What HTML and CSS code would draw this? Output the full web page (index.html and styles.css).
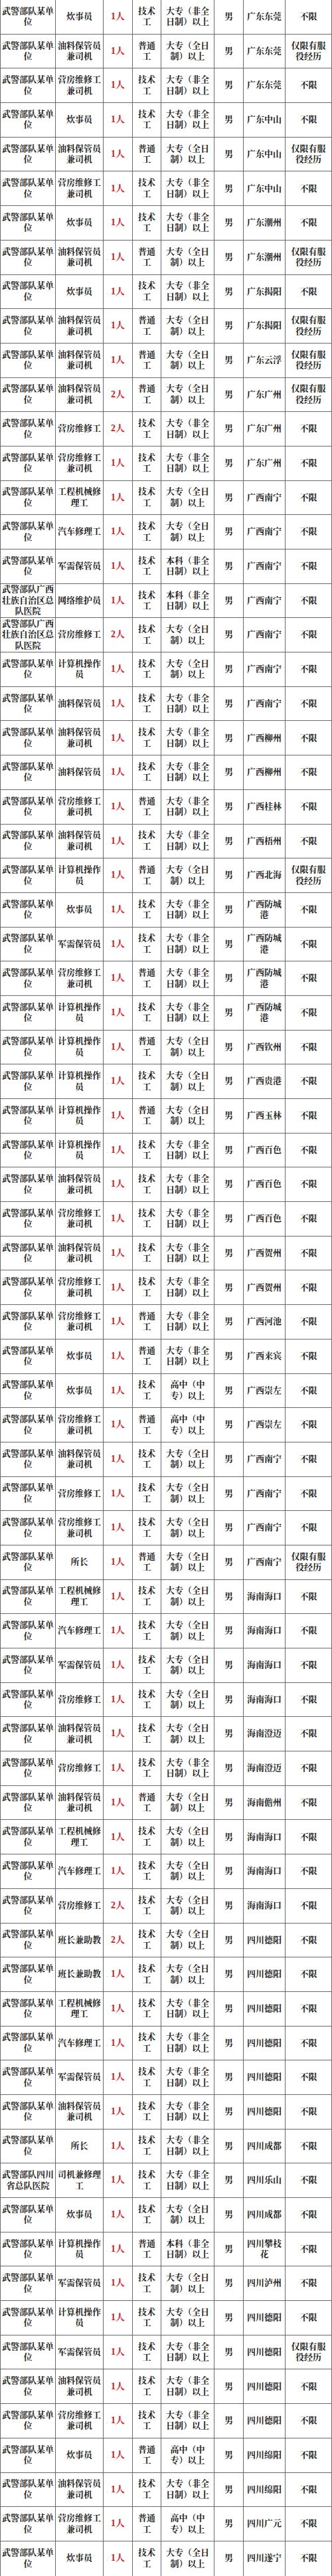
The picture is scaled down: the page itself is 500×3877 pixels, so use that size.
FILE: index.html
```html
<!DOCTYPE html>
<html lang="zh-CN">
<head>
<meta charset="utf-8">
<title>武警部队招聘岗位表</title>
<link rel="stylesheet" href="styles.css">
</head>
<body>
<table class="jobs">
<colgroup>
<col class="c-unit"><col class="c-post"><col class="c-num"><col class="c-type"><col class="c-edu"><col class="c-sex"><col class="c-place"><col class="c-req">
</colgroup>
<tbody>
<tr><td>武警部队某单位</td><td>炊事员</td><td class="num">1人</td><td>技术工</td><td>大专（非全日制）以上</td><td>男</td><td>广东东莞</td><td>不限</td></tr>
<tr><td>武警部队某单位</td><td>油料保管员兼司机</td><td class="num">1人</td><td>普通工</td><td>大专（全日制）以上</td><td>男</td><td>广东东莞</td><td>仅限有服役经历</td></tr>
<tr><td>武警部队某单位</td><td>营房维修工兼司机</td><td class="num">1人</td><td>技术工</td><td>大专（非全日制）以上</td><td>男</td><td>广东东莞</td><td>不限</td></tr>
<tr><td>武警部队某单位</td><td>炊事员</td><td class="num">1人</td><td>技术工</td><td>大专（非全日制）以上</td><td>男</td><td>广东中山</td><td>不限</td></tr>
<tr><td>武警部队某单位</td><td>油料保管员兼司机</td><td class="num">1人</td><td>普通工</td><td>大专（全日制）以上</td><td>男</td><td>广东中山</td><td>仅限有服役经历</td></tr>
<tr><td>武警部队某单位</td><td>营房维修工兼司机</td><td class="num">1人</td><td>技术工</td><td>大专（非全日制）以上</td><td>男</td><td>广东中山</td><td>不限</td></tr>
<tr><td>武警部队某单位</td><td>炊事员</td><td class="num">1人</td><td>技术工</td><td>大专（非全日制）以上</td><td>男</td><td>广东潮州</td><td>不限</td></tr>
<tr><td>武警部队某单位</td><td>油料保管员兼司机</td><td class="num">1人</td><td>普通工</td><td>大专（全日制）以上</td><td>男</td><td>广东潮州</td><td>仅限有服役经历</td></tr>
<tr><td>武警部队某单位</td><td>炊事员</td><td class="num">1人</td><td>技术工</td><td>大专（非全日制）以上</td><td>男</td><td>广东揭阳</td><td>不限</td></tr>
<tr><td>武警部队某单位</td><td>油料保管员兼司机</td><td class="num">1人</td><td>普通工</td><td>大专（全日制）以上</td><td>男</td><td>广东揭阳</td><td>仅限有服役经历</td></tr>
<tr><td>武警部队某单位</td><td>油料保管员兼司机</td><td class="num">1人</td><td>普通工</td><td>大专（全日制）以上</td><td>男</td><td>广东云浮</td><td>仅限有服役经历</td></tr>
<tr><td>武警部队某单位</td><td>油料保管员兼司机</td><td class="num">2人</td><td>普通工</td><td>大专（全日制）以上</td><td>男</td><td>广东广州</td><td>仅限有服役经历</td></tr>
<tr><td>武警部队某单位</td><td>营房维修工</td><td class="num">2人</td><td>技术工</td><td>大专（非全日制）以上</td><td>男</td><td>广东广州</td><td>不限</td></tr>
<tr><td>武警部队某单位</td><td>营房维修工兼司机</td><td class="num">1人</td><td>技术工</td><td>大专（非全日制）以上</td><td>男</td><td>广东广州</td><td>不限</td></tr>
<tr><td>武警部队某单位</td><td>工程机械修理工</td><td class="num">1人</td><td>技术工</td><td>大专（全日制）以上</td><td>男</td><td>广西南宁</td><td>不限</td></tr>
<tr><td>武警部队某单位</td><td>汽车修理工</td><td class="num">1人</td><td>技术工</td><td>大专（全日制）以上</td><td>男</td><td>广西南宁</td><td>不限</td></tr>
<tr><td>武警部队某单位</td><td>军需保管员</td><td class="num">1人</td><td>技术工</td><td>本科（非全日制）以上</td><td>男</td><td>广西南宁</td><td>不限</td></tr>
<tr><td>武警部队广西壮族自治区总队医院</td><td>网络维护员</td><td class="num">1人</td><td>技术工</td><td>本科（非全日制）以上</td><td>男</td><td>广西南宁</td><td>不限</td></tr>
<tr><td>武警部队广西壮族自治区总队医院</td><td>营房维修工</td><td class="num">2人</td><td>技术工</td><td>大专（全日制）以上</td><td>男</td><td>广西南宁</td><td>不限</td></tr>
<tr><td>武警部队某单位</td><td>计算机操作员</td><td class="num">1人</td><td>技术工</td><td>大专（全日制）以上</td><td>男</td><td>广西南宁</td><td>不限</td></tr>
<tr><td>武警部队某单位</td><td>油料保管员</td><td class="num">1人</td><td>技术工</td><td>大专（非全日制）以上</td><td>男</td><td>广西南宁</td><td>不限</td></tr>
<tr><td>武警部队某单位</td><td>油料保管员兼司机</td><td class="num">1人</td><td>技术工</td><td>大专（非全日制）以上</td><td>男</td><td>广西柳州</td><td>不限</td></tr>
<tr><td>武警部队某单位</td><td>油料保管员</td><td class="num">1人</td><td>技术工</td><td>大专（非全日制）以上</td><td>男</td><td>广西柳州</td><td>不限</td></tr>
<tr><td>武警部队某单位</td><td>营房维修工兼司机</td><td class="num">1人</td><td>普通工</td><td>大专（非全日制）以上</td><td>男</td><td>广西桂林</td><td>不限</td></tr>
<tr><td>武警部队某单位</td><td>油料保管员兼司机</td><td class="num">1人</td><td>技术工</td><td>大专（非全日制）以上</td><td>男</td><td>广西梧州</td><td>不限</td></tr>
<tr><td>武警部队某单位</td><td>计算机操作员</td><td class="num">1人</td><td>普通工</td><td>大专（全日制）以上</td><td>男</td><td>广西北海</td><td>仅限有服役经历</td></tr>
<tr><td>武警部队某单位</td><td>炊事员</td><td class="num">1人</td><td>技术工</td><td>大专（非全日制）以上</td><td>男</td><td>广西防城港</td><td>不限</td></tr>
<tr><td>武警部队某单位</td><td>军需保管员</td><td class="num">1人</td><td>技术工</td><td>大专（非全日制）以上</td><td>男</td><td>广西防城港</td><td>不限</td></tr>
<tr><td>武警部队某单位</td><td>营房维修工兼司机</td><td class="num">1人</td><td>普通工</td><td>大专（非全日制）以上</td><td>男</td><td>广西防城港</td><td>不限</td></tr>
<tr><td>武警部队某单位</td><td>计算机操作员</td><td class="num">1人</td><td>技术工</td><td>大专（非全日制）以上</td><td>男</td><td>广西防城港</td><td>不限</td></tr>
<tr><td>武警部队某单位</td><td>计算机操作员</td><td class="num">1人</td><td>普通工</td><td>大专（全日制）以上</td><td>男</td><td>广西钦州</td><td>不限</td></tr>
<tr><td>武警部队某单位</td><td>计算机操作员</td><td class="num">1人</td><td>技术工</td><td>大专（全日制）以上</td><td>男</td><td>广西贵港</td><td>不限</td></tr>
<tr><td>武警部队某单位</td><td>计算机操作员</td><td class="num">1人</td><td>普通工</td><td>大专（全日制）以上</td><td>男</td><td>广西玉林</td><td>不限</td></tr>
<tr><td>武警部队某单位</td><td>计算机操作员</td><td class="num">1人</td><td>技术工</td><td>大专（非全日制）以上</td><td>男</td><td>广西百色</td><td>不限</td></tr>
<tr><td>武警部队某单位</td><td>油料保管员兼司机</td><td class="num">1人</td><td>技术工</td><td>大专（非全日制）以上</td><td>男</td><td>广西百色</td><td>不限</td></tr>
<tr><td>武警部队某单位</td><td>营房维修工兼司机</td><td class="num">1人</td><td>技术工</td><td>大专（非全日制）以上</td><td>男</td><td>广西百色</td><td>不限</td></tr>
<tr><td>武警部队某单位</td><td>油料保管员兼司机</td><td class="num">1人</td><td>技术工</td><td>大专（非全日制）以上</td><td>男</td><td>广西贺州</td><td>不限</td></tr>
<tr><td>武警部队某单位</td><td>营房维修工兼司机</td><td class="num">1人</td><td>技术工</td><td>大专（非全日制）以上</td><td>男</td><td>广西贺州</td><td>不限</td></tr>
<tr><td>武警部队某单位</td><td>营房维修工兼司机</td><td class="num">1人</td><td>普通工</td><td>大专（非全日制）以上</td><td>男</td><td>广西河池</td><td>不限</td></tr>
<tr><td>武警部队某单位</td><td>炊事员</td><td class="num">1人</td><td>普通工</td><td>大专（非全日制）以上</td><td>男</td><td>广西来宾</td><td>不限</td></tr>
<tr><td>武警部队某单位</td><td>炊事员</td><td class="num">1人</td><td>技术工</td><td>高中（中专）以上</td><td>男</td><td>广西崇左</td><td>不限</td></tr>
<tr><td>武警部队某单位</td><td>营房维修工兼司机</td><td class="num">1人</td><td>普通工</td><td>高中（中专）以上</td><td>男</td><td>广西崇左</td><td>不限</td></tr>
<tr><td>武警部队某单位</td><td>油料保管员兼司机</td><td class="num">1人</td><td>技术工</td><td>大专（全日制）以上</td><td>男</td><td>广西南宁</td><td>不限</td></tr>
<tr><td>武警部队某单位</td><td>营房维修工</td><td class="num">1人</td><td>技术工</td><td>大专（全日制）以上</td><td>男</td><td>广西南宁</td><td>不限</td></tr>
<tr><td>武警部队某单位</td><td>营房维修工兼司机</td><td class="num">1人</td><td>技术工</td><td>大专（全日制）以上</td><td>男</td><td>广西南宁</td><td>不限</td></tr>
<tr><td>武警部队某单位</td><td>所长</td><td class="num">1人</td><td>普通工</td><td>大专（全日制）以上</td><td>男</td><td>广西南宁</td><td>仅限有服役经历</td></tr>
<tr><td>武警部队某单位</td><td>工程机械修理工</td><td class="num">1人</td><td>技术工</td><td>大专（全日制）以上</td><td>男</td><td>海南海口</td><td>不限</td></tr>
<tr><td>武警部队某单位</td><td>汽车修理工</td><td class="num">1人</td><td>技术工</td><td>大专（全日制）以上</td><td>男</td><td>海南海口</td><td>不限</td></tr>
<tr><td>武警部队某单位</td><td>军需保管员</td><td class="num">1人</td><td>技术工</td><td>大专（全日制）以上</td><td>男</td><td>海南海口</td><td>不限</td></tr>
<tr><td>武警部队某单位</td><td>营房维修工</td><td class="num">1人</td><td>技术工</td><td>大专（全日制）以上</td><td>男</td><td>海南海口</td><td>不限</td></tr>
<tr><td>武警部队某单位</td><td>油料保管员兼司机</td><td class="num">1人</td><td>技术工</td><td>大专（全日制）以上</td><td>男</td><td>海南澄迈</td><td>不限</td></tr>
<tr><td>武警部队某单位</td><td>营房维修工</td><td class="num">1人</td><td>技术工</td><td>大专（非全日制）以上</td><td>男</td><td>海南澄迈</td><td>不限</td></tr>
<tr><td>武警部队某单位</td><td>油料保管员兼司机</td><td class="num">1人</td><td>普通工</td><td>大专（全日制）以上</td><td>男</td><td>海南儋州</td><td>不限</td></tr>
<tr><td>武警部队某单位</td><td>工程机械修理工</td><td class="num">1人</td><td>技术工</td><td>大专（全日制）以上</td><td>男</td><td>海南海口</td><td>不限</td></tr>
<tr><td>武警部队某单位</td><td>汽车修理工</td><td class="num">1人</td><td>技术工</td><td>大专（全日制）以上</td><td>男</td><td>海南海口</td><td>不限</td></tr>
<tr><td>武警部队某单位</td><td>营房维修工</td><td class="num">2人</td><td>技术工</td><td>大专（全日制）以上</td><td>男</td><td>海南海口</td><td>不限</td></tr>
<tr><td>武警部队某单位</td><td>班长兼助教</td><td class="num">2人</td><td>技术工</td><td>大专（全日制）以上</td><td>男</td><td>四川德阳</td><td>不限</td></tr>
<tr><td>武警部队某单位</td><td>班长兼助教</td><td class="num">1人</td><td>技术工</td><td>大专（全日制）以上</td><td>男</td><td>四川德阳</td><td>不限</td></tr>
<tr><td>武警部队某单位</td><td>工程机械修理工</td><td class="num">1人</td><td>技术工</td><td>大专（非全日制）以上</td><td>男</td><td>四川德阳</td><td>不限</td></tr>
<tr><td>武警部队某单位</td><td>汽车修理工</td><td class="num">1人</td><td>技术工</td><td>大专（非全日制）以上</td><td>男</td><td>四川德阳</td><td>不限</td></tr>
<tr><td>武警部队某单位</td><td>军需保管员</td><td class="num">1人</td><td>技术工</td><td>大专（非全日制）以上</td><td>男</td><td>四川德阳</td><td>不限</td></tr>
<tr><td>武警部队某单位</td><td>油料保管员兼司机</td><td class="num">1人</td><td>技术工</td><td>大专（非全日制）以上</td><td>男</td><td>四川德阳</td><td>不限</td></tr>
<tr><td>武警部队某单位</td><td>所长</td><td class="num">1人</td><td>技术工</td><td>大专（非全日制）以上</td><td>男</td><td>四川成都</td><td>不限</td></tr>
<tr><td>武警部队四川省总队医院</td><td>司机兼修理工</td><td class="num">1人</td><td>技术工</td><td>大专（非全日制）以上</td><td>男</td><td>四川乐山</td><td>不限</td></tr>
<tr><td>武警部队某单位</td><td>炊事员</td><td class="num">1人</td><td>技术工</td><td>大专（全日制）以上</td><td>男</td><td>四川成都</td><td>不限</td></tr>
<tr><td>武警部队某单位</td><td>计算机操作员</td><td class="num">1人</td><td>普通工</td><td>本科（非全日制）以上</td><td>男</td><td>四川攀枝花</td><td>不限</td></tr>
<tr><td>武警部队某单位</td><td>军需保管员</td><td class="num">1人</td><td>技术工</td><td>大专（全日制）以上</td><td>男</td><td>四川泸州</td><td>不限</td></tr>
<tr><td>武警部队某单位</td><td>计算机操作员</td><td class="num">1人</td><td>技术工</td><td>大专（全日制）以上</td><td>男</td><td>四川德阳</td><td>不限</td></tr>
<tr><td>武警部队某单位</td><td>军需保管员</td><td class="num">1人</td><td>技术工</td><td>大专（非全日制）以上</td><td>男</td><td>四川德阳</td><td>仅限有服役经历</td></tr>
<tr><td>武警部队某单位</td><td>油料保管员兼司机</td><td class="num">1人</td><td>技术工</td><td>大专（非全日制）以上</td><td>男</td><td>四川德阳</td><td>不限</td></tr>
<tr><td>武警部队某单位</td><td>营房维修工兼司机</td><td class="num">1人</td><td>技术工</td><td>大专（非全日制）以上</td><td>男</td><td>四川德阳</td><td>不限</td></tr>
<tr><td>武警部队某单位</td><td>炊事员</td><td class="num">1人</td><td>普通工</td><td>高中（中专）以上</td><td>男</td><td>四川绵阳</td><td>不限</td></tr>
<tr><td>武警部队某单位</td><td>油料保管员兼司机</td><td class="num">1人</td><td>技术工</td><td>大专（非全日制）以上</td><td>男</td><td>四川绵阳</td><td>不限</td></tr>
<tr><td>武警部队某单位</td><td>营房维修工兼司机</td><td class="num">1人</td><td>普通工</td><td>高中（中专）以上</td><td>男</td><td>四川广元</td><td>不限</td></tr>
<tr><td>武警部队某单位</td><td>炊事员</td><td class="num">1人</td><td>技术工</td><td>大专（全日制）以上</td><td>男</td><td>四川遂宁</td><td>不限</td></tr>
</tbody>
</table>
</body>
</html>
```

FILE: styles.css
```css
html, body {
  margin: 0;
  padding: 0;
  background: #ffffff;
}

.jobs {
  width: 500px;
  table-layout: fixed;
  border-collapse: separate;
  border-spacing: 0;
  font-family: "Liberation Serif", "Noto Serif CJK SC", "Noto Sans CJK SC", serif;
  font-size: 13px;
  font-weight: 700;
  line-height: 16.5px;
  color: #1c1c1c;
  text-spacing-trim: space-all;
}

.c-unit { width: 84px; }
.c-post { width: 72px; }
.c-num { width: 44px; }
.c-type { width: 43px; }
.c-edu { width: 80px; }
.c-sex { width: 44px; }
.c-place { width: 63px; }
.c-req { width: 70px; }

.jobs tr {
  height: 51.693px;
}

.jobs td {
  padding: 0 2px;
  text-align: center;
  vertical-align: middle;
  border-right: 1px solid #6a6a6a;
  border-bottom: 1px solid #6a6a6a;
  overflow: hidden;
}

.jobs td:first-child {
  border-left: 1px solid #6a6a6a;
  padding: 0 1px;
}

.jobs td:last-child {
  padding: 0 4px;
}

.jobs tr:last-child td {
  border-bottom: 0;
}

.jobs td.num {
  color: #d01a1f;
  font-size: 14px;
}
```
